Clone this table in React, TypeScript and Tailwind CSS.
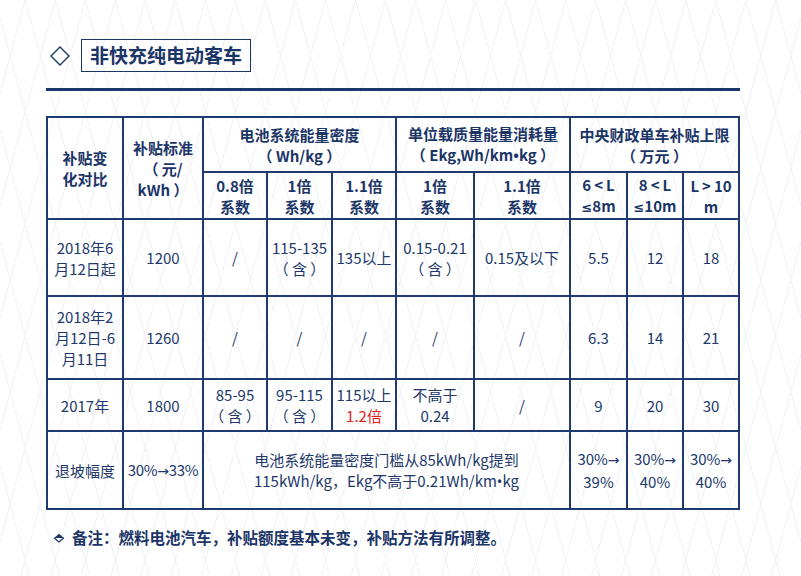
import type { ReactNode } from "react"

const cell =
  "flex items-center justify-center text-center border-r-2 border-b-2 border-[#1f3a70] leading-[21px]"

function C({ children, className = "" }: { children: ReactNode; className?: string }) {
  return (
    <div className={`${cell} ${className}`}>
      <div>{children}</div>
    </div>
  )
}

function H({ children, className = "" }: { children: ReactNode; className?: string }) {
  return (
    <div className={`${cell} font-bold text-[#1b3567] ${className}`}>
      <div>{children}</div>
    </div>
  )
}

// latin glyphs that the CJK font draws full width
const Dot = () => <span className="font-['Noto_Sans',sans-serif]">•</span>
const Le = () => <span className="font-['DejaVu_Sans',sans-serif] text-[13px]">≤</span>
const Arrow = () => <span className="font-['DejaVu_Sans',sans-serif] text-[14px]">→</span>

export default function App() {
  return (
    <div
      className="w-[801px] h-[576px] bg-white bg-[repeating-linear-gradient(75deg,transparent_0px,transparent_28px,#f1f2f6_28px,#f1f2f6_29px),repeating-linear-gradient(-75deg,transparent_0px,transparent_28px,#f1f2f6_28px,#f1f2f6_29px)] text-[#22386a] overflow-hidden"
      style={{ fontFamily: '"Noto Sans CJK SC", "Noto Sans", sans-serif' }}
    >
      <div className="pl-[46px] pt-[39px]">
        {/* title */}
        <div className="flex items-center h-[33px]">
          <svg width="22" height="22" viewBox="0 0 22 22" className="ml-[3px]">
            <path d="M11 2 L20 11 L11 20 L2 11 Z" fill="none" stroke="#1b3567" strokeWidth="1.4" />
          </svg>
          <div className="ml-[10px] h-[33px] border-[1.5px] border-[#1b3567] px-[8px] flex items-center text-[19px] font-bold text-[#1b3567]">
            非快充纯电动客车
          </div>
        </div>

        <div className="mt-[16px] w-[694px] h-[3px] bg-[#1c3770]" />

        {/* table */}
        <div className="mt-[25px] w-[694px] grid grid-cols-[76px_80px_64px_65px_64px_78px_96px_57px_56px_56px] grid-rows-[55px_47px_77px_83px_52px_78px] border-l-2 border-t-2 border-[#1f3a70] text-[15px]">
          <H className="row-span-2">
            补贴变
            <br />
            化对比
          </H>
          <H className="row-span-2">
            补贴标准
            <br />
            （ 元/
            <br />
            kWh ）
          </H>
          <H className="col-span-3">
            电池系统能量密度
            <br />
            （ Wh/kg ）
          </H>
          <H className="col-span-2">
            单位载质量能量消耗量
            <br />
            （ Ekg,Wh/km<Dot />kg ）
          </H>
          <H className="col-span-3">
            中央财政单车补贴上限
            <br />
            （ 万元 ）
          </H>

          <H>
            0.8倍
            <br />
            系数
          </H>
          <H>
            1倍
            <br />
            系数
          </H>
          <H>
            1.1倍
            <br />
            系数
          </H>
          <H>
            1倍
            <br />
            系数
          </H>
          <H>
            1.1倍
            <br />
            系数
          </H>
          <H>
            6&thinsp;&lt;&thinsp;L
            <br />
            <Le />8m
          </H>
          <H>
            8&thinsp;&lt;&thinsp;L
            <br />
            <Le />10m
          </H>
          <H>
            L&thinsp;&gt;&thinsp;10
            <br />m
          </H>

          {/* 2018-06 */}
          <C>
            2018年6
            <br />
            月12日起
          </C>
          <C>1200</C>
          <C>/</C>
          <C>
            115-135
            <br />
            （ 含 ）
          </C>
          <C>135以上</C>
          <C>
            0.15-0.21
            <br />
            （ 含 ）
          </C>
          <C>0.15及以下</C>
          <C>5.5</C>
          <C>12</C>
          <C>18</C>

          {/* 2018-02 */}
          <C>
            2018年2
            <br />
            月12日-6
            <br />
            月11日
          </C>
          <C>1260</C>
          <C>/</C>
          <C>/</C>
          <C>/</C>
          <C>/</C>
          <C>/</C>
          <C>6.3</C>
          <C>14</C>
          <C>21</C>

          {/* 2017 */}
          <C>2017年</C>
          <C>1800</C>
          <C>
            85-95
            <br />
            （ 含 ）
          </C>
          <C>
            95-115
            <br />
            （ 含 ）
          </C>
          <C>
            115以上
            <br />
            <span className="text-[#e0231f]">1.2倍</span>
          </C>
          <C>
            不高于
            <br />
            0.24
          </C>
          <C>/</C>
          <C>9</C>
          <C>20</C>
          <C>30</C>

          {/* 退坡 */}
          <C>退坡幅度</C>
          <C className="tracking-[-0.3px]">
            30%<Arrow />33%
          </C>
          <C className="col-span-5">
            电池系统能量密度门槛从85kWh/kg提到
            <br />
            115kWh/kg，Ekg不高于0.21Wh/km<Dot />kg
          </C>
          <C>
            30%<Arrow />
            <br />
            39%
          </C>
          <C>
            30%<Arrow />
            <br />
            40%
          </C>
          <C>
            30%<Arrow />
            <br />
            40%
          </C>
        </div>

        {/* note */}
        <div className="mt-[17px] flex items-center h-[22px]">
          <svg width="12" height="10" viewBox="0 0 12 10" className="ml-[7px]">
            <path d="M6 0.8 L11 5 L1 5 Z" fill="#1b3567" />
            <path d="M1.2 5 L6 9 L10.8 5" fill="none" stroke="#1b3567" strokeWidth="1.3" />
          </svg>
          <span className="ml-[7px] text-[15.5px] font-bold text-[#1b3567]">
            备注：燃料电池汽车，补贴额度基本未变，补贴方法有所调整。
          </span>
        </div>
      </div>
    </div>
  )
}
